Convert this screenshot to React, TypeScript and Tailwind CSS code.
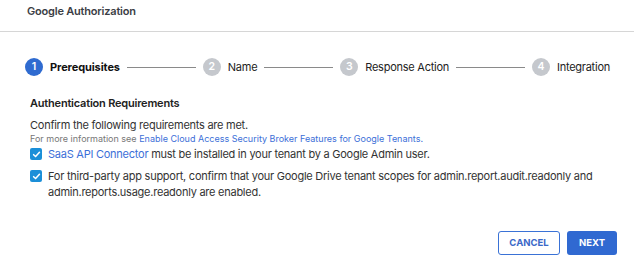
import React from "react";

function Check() {
  return (
    <span className="mt-[2px] flex h-[12px] w-[12px] shrink-0 items-center justify-center rounded-[2px] bg-[#1b8fd8]">
      <svg width="9" height="9" viewBox="0 0 10 10" fill="none">
        <path d="M1.8 5.2 L4 7.3 L8.3 2.6" stroke="white" strokeWidth="1.7" strokeLinecap="round" strokeLinejoin="round" />
      </svg>
    </span>
  );
}

function Step({ n, label, active }: { n: number; label: string; active?: boolean }) {
  return (
    <div className="flex shrink-0 items-center gap-[7px]">
      <span
        className={
          "flex h-[18px] w-[18px] items-center justify-center rounded-full text-[10.5px] font-semibold leading-none text-white " +
          (active ? "bg-[#2f6bd0]" : "bg-[#c5c8cd]")
        }
      >
        {n}
      </span>
      <span
        className={
          "text-[11px] leading-[16px] " +
          (active ? "font-bold tracking-[-0.1px] text-[#111]" : "tracking-[-0.25px] text-[#222]")
        }
      >
        {label}
      </span>
    </div>
  );
}

function Line() {
  return <div className="mx-[7px] h-px flex-1 bg-[#8a8a8a]" />;
}

export default function App() {
  return (
    <div className="h-[274px] w-[634px] bg-white" style={{ fontFamily: "Inter, 'Liberation Sans', sans-serif" }}>
      <div className="flex h-[32px] items-start border-b border-[#d6d6d6] pl-[27px] pt-[3px]">
        <span className="text-[11px] font-semibold leading-[16px] tracking-[-0.2px] text-[#3b3e45]">Google Authorization</span>
      </div>
      <div className="flex items-center pl-[25px] pr-[24px] pt-[26px]">
        <Step n={1} label="Prerequisites" active />
        <Line />
        <Step n={2} label="Name" />
        <Line />
        <Step n={3} label="Response Action" />
        <Line />
        <Step n={4} label="Integration" />
      </div>
      <div className="pl-[30px] pt-[19px]">
        <div className="text-[11px] font-semibold leading-[16px] tracking-[-0.2px] text-[#222]">Authentication Requirements</div>
        <div className="mt-[6px] text-[11px] leading-[16px] tracking-[-0.25px] text-[#333]">
          Confirm the following requirements are met.
        </div>
        <div className="text-[9px] leading-[11px] text-[#777]">
          For more information see <span className="text-[#3c6fd8]">Enable Cloud Access Security Broker Features for Google Tenants.</span>
        </div>
        <div className="mt-[2px] flex items-start gap-[6px]">
          <Check />
          <div className="text-[11px] leading-[16px] tracking-[-0.25px] text-[#333]">
            <span className="text-[#3c6fd8]">SaaS API Connector</span> must be installed in your tenant by a Google Admin user.
          </div>
        </div>
        <div className="mt-[6px] flex items-start gap-[6px]">
          <Check />
          <div className="text-[11px] leading-[16px] tracking-[-0.25px] text-[#333]">
            For third-party app support, confirm that your Google Drive tenant scopes for admin.report.audit.readonly and
            <br />
            admin.reports.usage.readonly are enabled.
          </div>
        </div>
      </div>
      <div className="mt-[31px] flex justify-end gap-[7px] pr-[17px]">
        <button className="h-[24px] w-[62px] rounded-[3px] border border-[#3a72d6] bg-white text-[9.5px] font-bold text-[#3a68c8]">
          CANCEL
        </button>
        <button className="h-[24px] w-[50px] rounded-[3px] bg-[#3069d1] text-[9.5px] font-bold text-white">NEXT</button>
      </div>
    </div>
  );
}
